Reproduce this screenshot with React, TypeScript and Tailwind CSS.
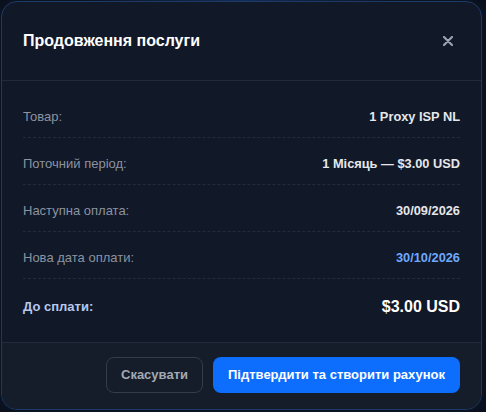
import React from 'react';

const rows = [
  { label: 'Товар:', value: '1 Proxy ISP NL', accent: false },
  { label: 'Поточний період:', value: '1 Місяць — $3.00 USD', accent: false },
  { label: 'Наступна оплата:', value: '30/09/2026', accent: false },
  { label: 'Нова дата оплати:', value: '30/10/2026', accent: true },
];

export default function App() {
  return (
    <div
      className="h-[412px] w-full overflow-hidden bg-[#0a0e16] pl-[1px] pt-[1px] bg-[radial-gradient(ellipse_at_top,#14284a_0%,#0a0e16_45%)]"
      style={{ fontFamily: '"Liberation Sans", Arial, sans-serif' }}
    >
      <div className="flex h-[409px] w-[481px] flex-col overflow-hidden rounded-[16px] border border-[#1d3a66] bg-[#111827] shadow-[0_0_24px_rgba(37,99,235,0.15)]">
        {/* Header */}
        <div className="flex h-[79px] shrink-0 items-center justify-between border-b border-[#222b3a] px-[21px]">
          <h2 className="text-[16px] font-bold text-white">Продовження послуги</h2>
          <button className="flex h-6 w-6 items-center justify-center text-[#9ca3af]">
            <svg width="10" height="10" viewBox="0 0 10 10" fill="none">
              <path d="M1 1L9 9M9 1L1 9" stroke="currentColor" strokeWidth="2.2" strokeLinecap="round" />
            </svg>
          </button>
        </div>

        {/* Body */}
        <div className="flex-1 px-[21px] pt-[10px]">
          {rows.map((row) => (
            <div
              key={row.label}
              className="flex items-center justify-between border-b border-dashed border-[#232c3c] pb-[10px] pt-[16px] text-[13px] leading-[20px]"
            >
              <span className="text-[#8b93a1]">{row.label}</span>
              <span className={row.accent ? 'text-[12.8px] font-bold text-[#6ea8fe]' : 'text-[12.8px] font-bold text-[#e5e7eb]'}>
                {row.value}
              </span>
            </div>
          ))}
          <div className="flex items-center justify-between pt-[16px] leading-[24px]">
            <span className="text-[13px] font-bold text-[#b6c8ec]">До сплати:</span>
            <span className="text-[16px] font-bold text-white">$3.00 USD</span>
          </div>
        </div>

        {/* Footer */}
        <div className="flex h-[67px] shrink-0 items-start justify-end gap-[10px] border-t border-[#222b3a] bg-[#151c2a] px-[21px] pt-[14px]">
          <button className="h-[36px] w-[97px] rounded-[8px] border border-[#343d4c] text-[13px] font-bold text-[#a3a9b4]">
            Скасувати
          </button>
          <button className="h-[36px] w-[247px] rounded-[8px] bg-[#0d6efd] text-[13px] font-bold text-white">
            Підтвердити та створити рахунок
          </button>
        </div>
      </div>
    </div>
  );
}
